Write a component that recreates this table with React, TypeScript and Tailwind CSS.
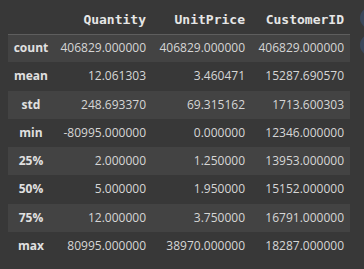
import React from 'react';

const rows: [string, string, string, string][] = [
  ['count', '406829.000000', '406829.000000', '406829.000000'],
  ['mean', '12.061303', '3.460471', '15287.690570'],
  ['std', '248.693370', '69.315162', '1713.600303'],
  ['min', '-80995.000000', '0.000000', '12346.000000'],
  ['25%', '2.000000', '1.250000', '13953.000000'],
  ['50%', '5.000000', '1.950000', '15152.000000'],
  ['75%', '12.000000', '3.750000', '16791.000000'],
  ['max', '80995.000000', '38970.000000', '18287.000000'],
];

const App: React.FC = () => {
  return (
    <div className="relative w-[364px] h-[269px] overflow-hidden bg-[#383838] pl-2">
      <table className="table-fixed border-collapse w-[342px] text-[12px] text-[#d6d6d6] [font-family:'Open_Sans',sans-serif]">
        <colgroup>
          <col className="w-[46px]" />
          <col className="w-[98px]" />
          <col className="w-[99px]" />
          <col className="w-[99px]" />
        </colgroup>
        <thead>
          <tr className="h-[34px] border-b border-[#5e5e5e]">
            <th></th>
            {['Quantity', 'UnitPrice', 'CustomerID'].map((h) => (
              <th
                key={h}
                className="text-right pr-[6px] pt-[5px] font-bold text-[13px] text-[#e6e6e6] [font-family:'DejaVu_Sans_Mono',monospace]"
              >
                {h}
              </th>
            ))}
          </tr>
        </thead>
        <tbody>
          {rows.map((r, i) => (
            <tr key={r[0]} className={`h-[28.25px] ${i % 2 === 0 ? 'bg-[#434343]' : ''}`}>
              <th className="text-center font-bold text-[#e0e0e0]">{r[0]}</th>
              <td className="text-right pr-[6px]">{r[1]}</td>
              <td className="text-right pr-[6px]">{r[2]}</td>
              <td className="text-right pr-[6px]">{r[3]}</td>
            </tr>
          ))}
        </tbody>
      </table>
      <div className="absolute left-[360px] top-[7px] w-[22px] h-[22px] rounded-full bg-[#3a475b]" />
      <div className="absolute left-[360px] top-[34px] w-[22px] h-[22px] rounded-full bg-[#3a475b]" />
    </div>
  );
};

export default App;
